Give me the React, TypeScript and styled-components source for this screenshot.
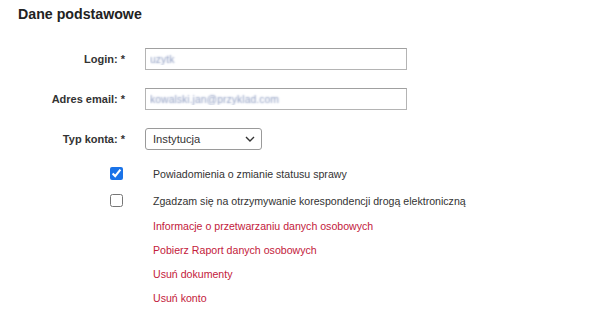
import React from "react";
import styled, { createGlobalStyle } from "styled-components";

const GlobalStyle = createGlobalStyle`
    body {
        margin: 0;
        background: #ffffff;
        font-family: "Liberation Sans", Arial, sans-serif;
        color: #333333;
    }
`;

const Page = styled.div`
    width: 604px;
    height: 315px;
    padding: 4px 0 0 18px;
    box-sizing: border-box;
    overflow: hidden;
`;

const Title = styled.h2`
    margin: 0;
    font-size: 14.2px;
    line-height: 20px;
    font-weight: bold;
    color: #222222;
`;

const Form = styled.div`
    display: flex;
    flex-direction: column;
    margin-top: 24px;
    margin-left: -1px;
`;

const FieldRow = styled.div`
    display: grid;
    grid-template-columns: 108px 1fr;
    column-gap: 20px;
    align-items: center;
    height: 22px;
    margin-bottom: 18px;
`;

const Label = styled.label`
    text-align: right;
    font-size: 11px;
    font-weight: bold;
    color: #333333;
`;

const TextInput = styled.input`
    width: 262px;
    height: 22px;
    box-sizing: border-box;
    border: 1px solid #b4b4b4;
    border-top-color: #a0a0a0;
    padding: 0 4px;
    font-family: "Liberation Sans", Arial, sans-serif;
    font-size: 10.5px;
    color: transparent;
    text-shadow: 0 0 2px #8c9bc0;
    outline: none;
`;

const SelectWrap = styled.div`
    position: relative;
    width: 117px;
    height: 22px;
`;

const Select = styled.select`
    appearance: none;
    width: 117px;
    height: 22px;
    box-sizing: border-box;
    border: 1px solid #9a9a9a;
    border-radius: 3px;
    background: #ffffff;
    padding: 0 6px 0 7px;
    font-family: "Liberation Sans", Arial, sans-serif;
    font-size: 11.2px;
    color: #333333;
    outline: none;
`;

const Chevron = styled.svg`
    position: absolute;
    right: 7px;
    top: 8px;
    pointer-events: none;
`;

const CheckRow = styled.div`
    display: grid;
    grid-template-columns: 108px 1fr;
    column-gap: 20px;
    align-items: center;
    height: 27px;
`;

const CheckCell = styled.div`
    display: flex;
    justify-content: flex-end;
    padding-right: 2px;
`;

const Check = styled.input`
    width: 13px;
    height: 13px;
    margin: 0;
    accent-color: #1a73e8;
`;

const CheckText = styled.span`
    padding-left: 8px;
    font-size: 10.6px;
    color: #333333;
`;

const LinkList = styled.div`
    display: flex;
    flex-direction: column;
    padding-left: 136px;
`;

const RedLink = styled.a`
    display: flex;
    align-items: center;
    height: 24px;
    font-size: 10.6px;
    color: #c3203b;
    text-decoration: none;
    cursor: pointer;
`;

const links = [
    "Informacje o przetwarzaniu danych osobowych",
    "Pobierz Raport danych osobowych",
    "Usuń dokumenty",
    "Usuń konto",
];

export default function App() {
    return (
        <>
            <GlobalStyle />
            <Page>
                <Title>Dane podstawowe</Title>
                <Form>
                    <FieldRow>
                        <Label>Login: *</Label>
                        <TextInput defaultValue="uzytk" />
                    </FieldRow>
                    <FieldRow>
                        <Label>Adres email: *</Label>
                        <TextInput defaultValue="kowalski.jan@przyklad.com" />
                    </FieldRow>
                    <FieldRow style={{ marginBottom: 10 }}>
                        <Label>Typ konta: *</Label>
                        <SelectWrap>
                            <Select defaultValue="inst">
                                <option value="inst">Instytucja</option>
                                <option value="os">Osoba fizyczna</option>
                            </Select>
                            <Chevron width="10" height="6" viewBox="0 0 10 6">
                                <path d="M1 1 L5 5 L9 1" fill="none" stroke="#333" strokeWidth="1.4" />
                            </Chevron>
                        </SelectWrap>
                    </FieldRow>
                    <CheckRow>
                        <CheckCell>
                            <Check type="checkbox" defaultChecked />
                        </CheckCell>
                        <CheckText>Powiadomienia o zmianie statusu sprawy</CheckText>
                    </CheckRow>
                    <CheckRow>
                        <CheckCell>
                            <Check type="checkbox" />
                        </CheckCell>
                        <CheckText>Zgadzam się na otrzymywanie korespondencji drogą elektroniczną</CheckText>
                    </CheckRow>
                    <LinkList>
                        {links.map(l => (
                            <RedLink key={l}>{l}</RedLink>
                        ))}
                    </LinkList>
                </Form>
            </Page>
        </>
    );
}
